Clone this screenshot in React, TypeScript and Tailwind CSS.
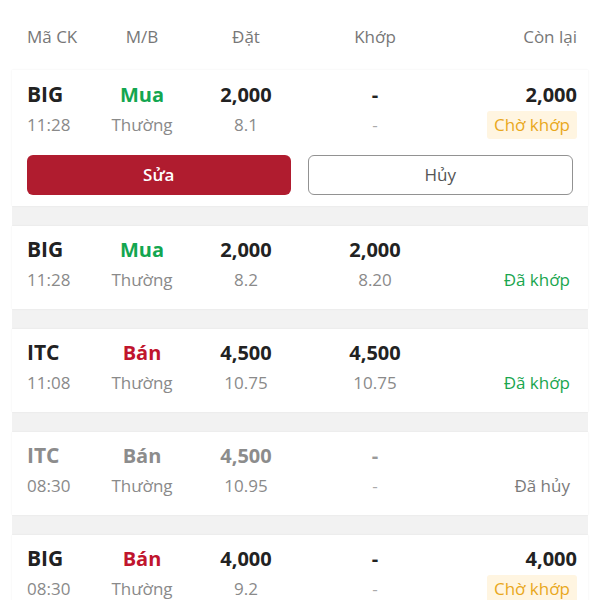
import React from "react";

type Order = {
  code: string;
  time: string;
  side: "Mua" | "Bán";
  qty: string;
  price: string;
  matchQty: string;
  matchPrice: string;
  remain: string;
  status: "wait" | "done" | "cancel";
  actions?: boolean;
};

const orders: Order[] = [
  { code: "BIG", time: "11:28", side: "Mua", qty: "2,000", price: "8.1", matchQty: "-", matchPrice: "-", remain: "2,000", status: "wait", actions: true },
  { code: "BIG", time: "11:28", side: "Mua", qty: "2,000", price: "8.2", matchQty: "2,000", matchPrice: "8.20", remain: "", status: "done" },
  { code: "ITC", time: "11:08", side: "Bán", qty: "4,500", price: "10.75", matchQty: "4,500", matchPrice: "10.75", remain: "", status: "done" },
  { code: "ITC", time: "08:30", side: "Bán", qty: "4,500", price: "10.95", matchQty: "-", matchPrice: "-", remain: "", status: "cancel" },
  { code: "BIG", time: "08:30", side: "Bán", qty: "4,000", price: "9.2", matchQty: "-", matchPrice: "-", remain: "4,000", status: "wait" },
];

const grid = "grid grid-cols-[70px_90px_118px_140px_1fr] items-center";

function Status({ status }: { status: Order["status"] }) {
  if (status === "wait")
    return (
      <span className="inline-block rounded-[3px] bg-[#fff5e1] px-[7px] py-[1px] font-medium leading-[26px] text-[#e9a81c]">
        Chờ khớp
      </span>
    );
  if (status === "done")
    return <span className="inline-block px-[7px] font-medium text-[#1aa64f]">Đã khớp</span>;
  return <span className="inline-block px-[7px] text-[#7a7a7a]">Đã hủy</span>;
}

function OrderCard({ o }: { o: Order }) {
  const cancelled = o.status === "cancel";
  const main = cancelled ? "text-[#8c8c8c]" : "text-[#222]";
  const side = cancelled
    ? "text-[#8c8c8c]"
    : o.side === "Mua"
    ? "text-[#13a650]"
    : "text-[#c0152d]";

  return (
    <div
      className={`bg-white pl-[15px] pr-[11px] shadow-[0_0_2px_rgba(0,0,0,0.07)] ${
        o.actions ? "pb-[11px] pt-[9px]" : "pb-[14px] pt-[8px]"
      }`}
    >
      <div className={`${grid} h-[30px] text-[20px] font-bold`}>
        <span className={`text-[21px] ${main}`}>{o.code}</span>
        <span className={`text-center ${side}`}>{o.side}</span>
        <span className={`text-center ${main}`}>{o.qty}</span>
        <span className={`text-center ${cancelled ? "text-[#9a9a9a]" : "text-[#222]"}`}>
          {o.matchQty}
        </span>
        <span className={`text-right ${main}`}>{o.remain}</span>
      </div>
      <div className={`${grid} mt-[1px] h-[30px] text-[17px] text-[#8a8a8a]`}>
        <span>{o.time}</span>
        <span className="text-center">Thường</span>
        <span className="text-center">{o.price}</span>
        <span className={`text-center ${o.matchPrice === "-" ? "text-[#aaa]" : ""}`}>{o.matchPrice}</span>
        <span className="text-right">
          <Status status={o.status} />
        </span>
      </div>
      {o.actions && (
        <div className="mr-[4px] mt-[15px] flex gap-[17px]">
          <button className="h-[40px] flex-1 rounded-[6px] bg-[#b01c2f] text-[17px] font-semibold text-white">
            Sửa
          </button>
          <button className="h-[40px] flex-1 rounded-[6px] border-[1.5px] border-[#929292] bg-white text-[17px] text-[#555]">
            Hủy
          </button>
        </div>
      )}
    </div>
  );
}

export default function App() {
  return (
    <div
      className="h-screen overflow-hidden bg-white"
      style={{ fontFamily: '"Open Sans", "Noto Sans", sans-serif' }}
    >
      <div className={`${grid} h-[70px] pl-[27px] pr-[23px] pt-[4px] text-[17px] text-[#777]`}>
        <span>Mã CK</span>
        <span className="text-center">M/B</span>
        <span className="text-center">Đặt</span>
        <span className="text-center">Khớp</span>
        <span className="text-right">Còn lại</span>
      </div>
      <div className="mx-[12px] flex flex-col gap-[20px] bg-[#f2f2f2]">
        {orders.map((o, i) => (
          <OrderCard key={i} o={o} />
        ))}
      </div>
    </div>
  );
}
